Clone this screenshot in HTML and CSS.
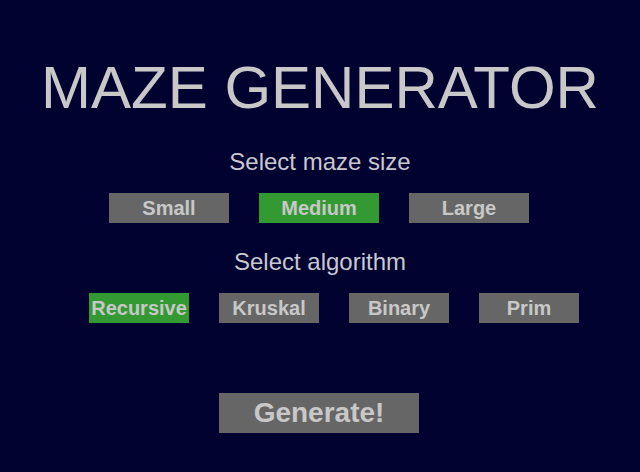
FILE: index.html
```html
<!DOCTYPE html>
<html>
<head>
<meta charset="utf-8">
<link rel="stylesheet" href="styles.css">
</head>
<body>
<main class="app">
  <h1 class="title">MAZE GENERATOR</h1>
  <p class="label label-size">Select maze size</p>
  <div class="row row-size">
    <button class="btn btn-size">Small</button>
    <button class="btn btn-size active">Medium</button>
    <button class="btn btn-size">Large</button>
  </div>
  <p class="label label-algo">Select algorithm</p>
  <div class="row row-algo">
    <button class="btn btn-algo active">Recursive</button>
    <button class="btn btn-algo">Kruskal</button>
    <button class="btn btn-algo">Binary</button>
    <button class="btn btn-algo">Prim</button>
  </div>
  <button class="btn btn-generate">Generate!</button>
</main>
</body>
</html>
```
FILE: styles.css
```css
html, body {
  margin: 0;
  padding: 0;
  height: 100%;
}
body {
  background: #020231;
  font-family: "Liberation Sans", Arial, sans-serif;
  color: #c8c8c8;
  overflow: hidden;
}
.app {
  display: flex;
  flex-direction: column;
  align-items: center;
  padding-top: 58px;
  padding-right: 2px;
}
.title {
  margin: 0 0 0 2px;
  font-size: 60px;
  line-height: 60px;
  font-weight: normal;
  color: #c8c8c8;
}
.label {
  margin: 0 0 0 2px;
  font-size: 24px;
  line-height: 24px;
  color: #c8c8d0;
}
.label-size {
  margin-top: 32px;
}
.label-algo {
  margin-top: 27px;
}
.row {
  display: flex;
  gap: 30px;
  margin-top: 19px;
}
.row-algo {
  margin-left: 30px;
}
.btn {
  border: 0;
  margin: 0;
  padding: 0;
  background: #666666;
  color: #c8c8c8;
  font-family: "Liberation Sans", Arial, sans-serif;
  font-weight: bold;
  font-size: 20px;
  height: 30px;
  line-height: 27px;
  text-align: center;
}
.btn.active {
  background: #339933;
}
.btn-size {
  width: 120px;
}
.btn-algo {
  width: 100px;
}
.btn-generate {
  width: 200px;
  height: 40px;
  line-height: 38px;
  font-size: 28px;
  margin-top: 70px;
}
```
